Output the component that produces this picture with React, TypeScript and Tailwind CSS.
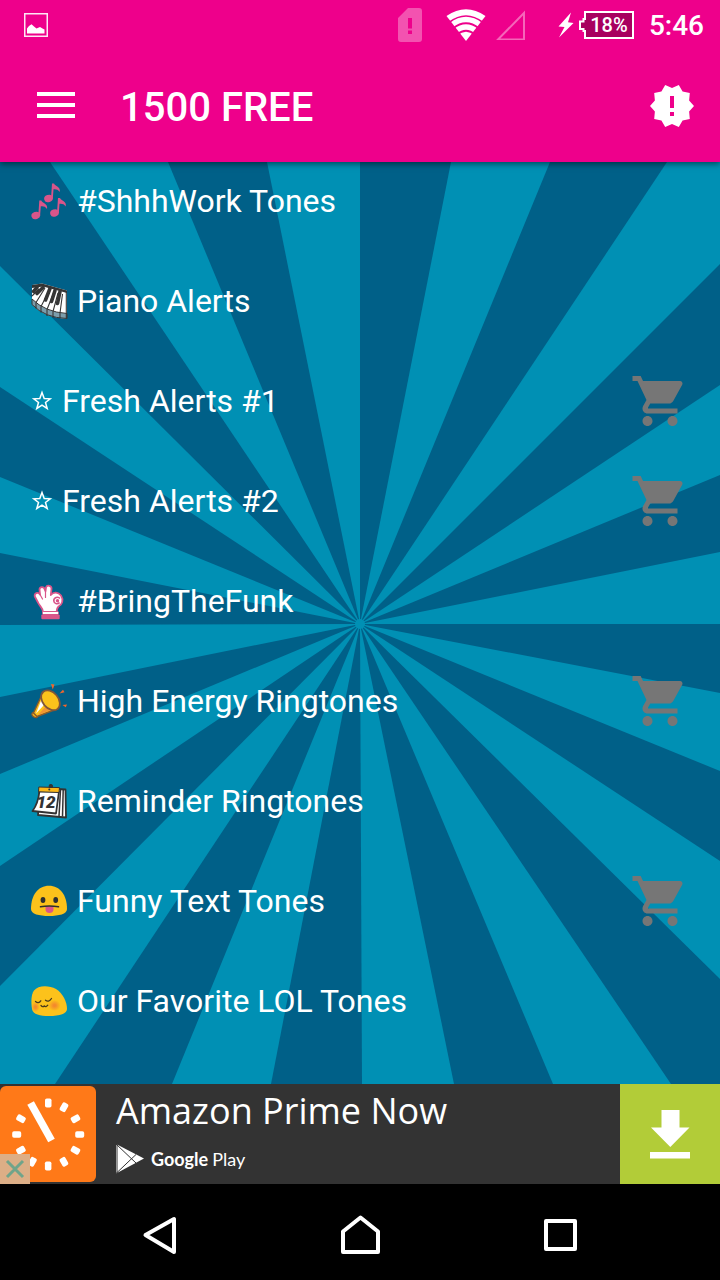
import type { ReactNode } from 'react';
import { MdNewReleases, MdShoppingCart } from 'react-icons/md';

const DARK_RAYS = [
  '360,0 451,0',
  '550,0 667,0',
  '720,102 720,223',
  '720,313 720,390',
  '720,462 720,531',
  '720,609 720,699',
  '720,817 720,922 671,922',
  '553,922 454,922',
  '362,922 271,922',
  '172,922 55,922',
  '0,824 0,704',
  '0,612 0,535',
  '0,463 0,391',
  '0,315 0,225',
  '0,104 0,0 50,0',
  '168,0 267,0',
];

function Sunburst() {
  return (
    <svg
      className="absolute inset-0 h-full w-full"
      viewBox="0 0 720 922"
      preserveAspectRatio="none"
      aria-hidden="true"
    >
      <rect width="720" height="922" fill="#0090b4" />
      {DARK_RAYS.map((points) => (
        <polygon key={points} points={`360,462 ${points}`} fill="#006088" />
      ))}
      <circle cx="360" cy="462" r="5" fill="#0090b4" />
    </svg>
  );
}

function Emoji({ children }: { children: ReactNode }) {
  return (
    <svg className="h-[38px] w-[38px] shrink-0" viewBox="0 0 38 38" aria-hidden="true">
      {children}
    </svg>
  );
}

function Notes() {
  return (
    <Emoji>
      <g fill="#d9558a">
        {[
          [18.5, 16.5],
          [5.8, 33.5],
          [24.5, 31],
        ].map(([x, y]) => (
          <g key={x} transform={`translate(${x} ${y})`}>
            <ellipse rx="4.4" ry="3.6" transform="rotate(-20)" />
            <path d="M2.5 0 3.500-15H5.500C6.500-12 12.500-12 11.200-6.500 9.600-9 7.500-9.500 5-9.200L4.300 0z" />
          </g>
        ))}
      </g>
    </Emoji>
  );
}

function Piano() {
  return (
    <Emoji>
      <path d="M2 3 12 1.5 37 8.5V36.5Q15 36 2 22.5z" fill="#fff" />
      <path d="M2 17Q15 30 37 31.5V36.5Q15 36 2 22.5z" fill="#7c9dab" stroke="#353535" strokeWidth="1" />
      <path
        d="M6 20.5v6M11 24.5v6M17 27.5v6.5M23 29.5v6M30 31v5M36.3 9v27M6 20.5 15 6M11 24.5 19 9M17 27.5 24 10M23 29.5 28 11M30 31 32.5 12M2 14 9 7"
        fill="none"
        stroke="#353535"
        strokeWidth="1.1"
      />
      <path d="M2 3 12 1.5 37 8.5V11L13 4.5 2 6z" fill="#353535" />
      <path
        d="M7 5.5 3.5 9.5M13 5.5 7 11.5M20 6.5 15.5 18M25 8.5 21.5 19.5M30 9.5 27.5 21.5"
        stroke="#353535"
        strokeWidth="3.6"
        strokeLinecap="round"
      />
    </Emoji>
  );
}

function OkHand() {
  return (
    <Emoji>
      <path
        d="M13 30C13 26 9.5 24 8 20.5L4.800 14.500C4 11 8 9.500 10 12.500L9.500 7.500C9.500 4.500 14 4 14.800 7.500L15.500 9 16 5.500C17 2.500 22 3.500 21.500 7L20.800 13C23.500 9.500 28.500 10 31 13.500 34 18 32 23 28.500 24.500 27 26 26.500 27.500 26.500 30z"
        fill="#fff"
        stroke="#d9558a"
        strokeWidth="1.8"
        strokeLinejoin="round"
      />
      <path d="M10 12.500 12.500 17M15.500 9V15.500" stroke="#d9558a" strokeWidth="1.200" strokeLinecap="round" />
      <path d="M30 16.500C28 14 23.500 15.800 23.800 19S28 22.500 29.500 20.500" fill="none" stroke="#d9558a" strokeWidth="1.6" />
      <circle cx="27.500" cy="18.700" r="1.700" fill="#d9558a" />
      <rect x="12.5" y="29.5" width="16" height="3" rx="1" fill="#fff" stroke="#d9558a" />
      <rect x="11.3" y="32.5" width="18.4" height="4.7" rx="1" fill="#d9558a" />
    </Emoji>
  );
}

function PartyCone() {
  return (
    <Emoji>
      <ellipse cx="4.8" cy="33" rx="3.2" ry="2.2" fill="#f5b41c" stroke="#8a5a2c" strokeWidth="1.2" transform="rotate(35 4.8 33)" />
      <path d="M13 10.5 3.5 31 7 34.5 28 26.5z" fill="#fcc21b" stroke="#8a5a2c" strokeWidth="1.4" strokeLinejoin="round" />
      <path d="M12.5 15 6 31.5 14 23z" fill="#fff" />
      <path d="M16 24 8 33 21 28z" fill="#f19534" />
      <ellipse cx="20.5" cy="18.3" rx="11.2" ry="7.8" transform="rotate(50 20.5 18.3)" fill="#fcc21b" stroke="#80563a" strokeWidth="1.8" />
      <path d="M21 2 24.5 2.5 22.8 7.5zM29.5 11.5 33 7.8 34.5 10.3zM32.5 23 37 22.5 35.8 25.3z" fill="#f2662b" />
    </Emoji>
  );
}

function Calendar() {
  return (
    <Emoji>
      <path d="M10 6 35.5 7.5 36 35.5 8 33z" fill="#fff" stroke="#333" strokeWidth="1.8" strokeLinejoin="round" />
      <path d="M30.5 8 29 34M33.2 8 32.5 34.5" stroke="#333" strokeWidth="1.5" />
      <path d="M9.5 9 29 9.5 26 31.5 2.5 29Q8 22 9.500 9z" fill="#fff" stroke="#333" strokeWidth="1.8" strokeLinejoin="round" />
      <path d="M8.8 5 29.5 5.6 29 10.5 8.5 9.8z" fill="#fbb81a" stroke="#333" />
      <path d="M19.5 5.500C18 1.500 23.500 1.500 22.300 5.500z" fill="#333" stroke="#333" strokeWidth="1.200" />
      <circle cx="19.3" cy="7.5" r="1" fill="#333" />
      <text
        x="16"
        y="26"
        fontSize="17"
        fontWeight="900"
        fontStyle="italic"
        textAnchor="middle"
        fill="#333"
        className="font-['Roboto',sans-serif]"
      >
        12
      </text>
    </Emoji>
  );
}

function TongueFace() {
  return (
    <Emoji>
      <path d="M1 27C1 13 8 3.7 19 3.7S37 13 37 27C37 32 29 34 19 34S1 32 1 27z" fill="#fcc21b" />
      <ellipse cx="13" cy="18" rx="2.4" ry="3" fill="#2f2f2f" />
      <ellipse cx="25.7" cy="18" rx="2.4" ry="3" fill="#2f2f2f" />
      <path d="M15.5 24.500h8v2.500a4 4 0 0 1-8 0z" fill="#d9558a" />
      <path d="M10.5 24.8Q19 23 28.5 24.8" fill="none" stroke="#2f2f2f" strokeWidth="1.5" strokeLinecap="round" />
    </Emoji>
  );
}

function RelievedFace() {
  return (
    <Emoji>
      <defs>
        <radialGradient id="blush">
          <stop offset="0.2" stopColor="#f48a2c" />
          <stop offset="1" stopColor="#f48a2c" stopOpacity="0" />
        </radialGradient>
      </defs>
      <path d="M2 27C1 20 1 13 4 8.5 8 3 19 3 26 7 33 11.5 37 20 37 27 37 31.5 30 34 19 34 10 34 3 32.5 2 27z" fill="#fcc21b" />
      <ellipse cx="24.5" cy="23.5" rx="6" ry="5.5" fill="url(#blush)" />
      <ellipse cx="5.5" cy="25" rx="4" ry="5" fill="url(#blush)" />
      <path
        d="M5.5 19.5Q8.5 22 10.8 18.8M15.5 18.2Q18.5 20.8 21.5 16.5M11 23.5Q12.8 25.5 14.3 24 16 25.5 17.8 23.2"
        fill="none"
        stroke="#4a3a1c"
        strokeWidth="1.3"
        strokeLinecap="round"
      />
    </Emoji>
  );
}

function Star() {
  return (
    <svg className="h-[38px] w-[23px] shrink-0" viewBox="0 0 23 38" aria-hidden="true">
      <path
        d="M12 10.5 14.2 16.500 20.200 16.800 15.500 20.500 17.200 26.500 12 23.200 6.800 26.500 8.500 20.500 3.800 16.800 9.800 16.500z"
        fill="none"
        stroke="#fff"
        strokeWidth="1.5"
      />
    </svg>
  );
}

interface Category {
  label: string;
  icon: ReactNode;
  paid?: boolean;
}

const CATEGORIES: Category[] = [
  { label: '#ShhhWork Tones', icon: <Notes /> },
  { label: 'Piano Alerts', icon: <Piano /> },
  { label: 'Fresh Alerts #1', icon: <Star />, paid: true },
  { label: 'Fresh Alerts #2', icon: <Star />, paid: true },
  { label: '#BringTheFunk', icon: <OkHand /> },
  { label: 'High Energy Ringtones', icon: <PartyCone />, paid: true },
  { label: 'Reminder Ringtones', icon: <Calendar /> },
  { label: 'Funny Text Tones', icon: <TongueFace />, paid: true },
  { label: 'Our Favorite LOL Tones', icon: <RelievedFace /> },
];

function StatusBar() {
  return (
    <div className="flex h-[50px] items-center pr-4 pl-6 text-white">
      <svg className="h-6 w-6" viewBox="0 0 24 24" aria-hidden="true">
        <rect x="0.75" y="0.75" width="22.5" height="22.5" fill="none" stroke="#fff" strokeWidth="1.5" strokeOpacity="0.9" />
        <path d="M3 20.5V15.5L5 13 7.5 11.3 10 13.5 12.5 15.5 16 14 18.5 15.5 20.5 16.5V20.5z" fill="#fff" />
      </svg>
      <svg className="ml-auto h-[34px] w-6" viewBox="0 0 24 34" aria-hidden="true">
        <path
          d="M10 0H21a3 3 0 0 1 3 3V31a3 3 0 0 1-3 3H3a3 3 0 0 1-3-3V10zM10 10V20.5H14V10zM10 22.5V26H14V22.5z"
          fill="#fff"
          fillOpacity="0.32"
          fillRule="evenodd"
        />
      </svg>
      <svg className="ml-6 h-8 w-10" viewBox="0 0 40 32" aria-hidden="true">
        <path d="M20 32 .5 7Q20-6.500 39.500 7z" fill="#fff" />
        <g fill="none" stroke="#ee008b" strokeWidth="1.7">
          <path d="M3 13.500Q20 .5 37 13.500" />
          <path d="M7 19.500Q20 9 33 19.500" />
          <path d="M11 25.500Q20 18 29 25.500" />
        </g>
      </svg>
      <svg className="ml-[9px] h-[30px] w-[30px]" viewBox="0 0 30 30" aria-hidden="true">
        <path d="M29 3V29.500H3z" fill="none" stroke="#fff" strokeOpacity="0.4" strokeWidth="2" />
      </svg>
      <svg className="ml-[33px] h-[26px] w-4" viewBox="0 0 16 26" aria-hidden="true">
        <path d="M13 .5 0.5 14.500 6.500 15 1 25.500 15.500 11 10 10.300z" fill="#fff" />
      </svg>
      <div className="ml-1 flex items-center">
        <svg className="z-10 -mr-[2px] h-4 w-2" viewBox="0 0 8 16" aria-hidden="true">
          <path d="M8 2H5.500V4.500H2V12H5.500V14H8" fill="#a8005f" stroke="#fff" strokeWidth="2" />
        </svg>
        <div className="flex h-7 w-[50px] items-center justify-center border-2 border-white bg-[#a8005f] text-xl leading-6 font-medium">
          18%
        </div>
      </div>
      <div className="ml-[15px] pt-[2px] text-[28px] leading-8 font-medium">5:46</div>
    </div>
  );
}

function AppBar() {
  return (
    <div className="flex h-28 items-center px-6 text-white">
      <button type="button" aria-label="Open menu" className="flex h-16 w-16 items-center justify-center pb-[2px]">
        <svg className="h-[26px] w-[38px]" viewBox="0 0 38 26" fill="#fff" aria-hidden="true">
          <rect width="38" height="4" />
          <rect y="11" width="38" height="4" />
          <rect y="22" width="38" height="4" />
        </svg>
      </button>
      <h1 className="ml-8 grow pt-1 text-[40px] leading-[48px] font-medium">1500 FREE</h1>
      <button type="button" aria-label="New releases">
        <MdNewReleases className="h-12 w-12" />
      </button>
    </div>
  );
}

function AdBanner() {
  return (
    <aside className="flex h-[100px] shrink-0 items-center bg-[#333]">
      <div className="relative flex h-full shrink-0 items-center">
        <svg className="h-24 w-24" viewBox="0 0 96 96" aria-hidden="true">
          <rect width="96" height="96" rx="6" fill="#ff7918" />
          {[0, 30, 60, 90, 120, 150, 180, 210, 240, 270, 300].map((angle) => (
            <rect
              key={angle}
              x="45"
              y="12.5"
              width="6.5"
              height="9"
              rx="1.8"
              fill="#fff"
              transform={`rotate(${angle} 48.2 48.5)`}
            />
          ))}
          <path d="M30.6 17 51.5 54.5" stroke="#fff" strokeWidth="7.5" />
        </svg>
        <button
          type="button"
          aria-label="Close ad"
          className="absolute bottom-0 left-0 flex h-[30px] w-[30px] items-center justify-center bg-[#dcae86]"
        >
          <svg className="h-5 w-5" viewBox="0 0 20 20" aria-hidden="true">
            <path d="M2 2 18 18M18 2 2 18" stroke="#6fa48a" strokeWidth="3" />
          </svg>
        </button>
      </div>
      <a href="#install" className="flex h-full grow flex-col pt-[3px] pl-5 text-white">
        <span className="font-['Open_Sans',sans-serif] text-4xl leading-[48px]">Amazon Prime Now</span>
        <span className="mt-2 flex items-center gap-[7px] font-['Lato',sans-serif] text-lg leading-8">
          <svg className="h-[30px] w-7" viewBox="0 0 28 30" aria-hidden="true">
            <path d="M0 0 28 14.500 0 29.500z" fill="#fff" />
            <path d="M0 0 20 19M0 29.500 20 10.500M1 0V29" fill="none" stroke="#333" strokeWidth="1" />
          </svg>
          <span className="flex gap-1">
            <span className="font-bold">Google</span>
            <span>Play</span>
          </span>
        </span>
      </a>
      <button
        type="button"
        aria-label="Download"
        className="flex h-full w-[100px] shrink-0 items-center justify-center bg-[#b2cc38]"
      >
        <svg className="h-[50px] w-10" viewBox="0 0 40 50" fill="#fff" aria-hidden="true">
          <path d="M11.5 1H29.500V18.500H39.500L20.300 38 1 18.500H11.500zM0 43H40V49.500H0z" />
        </svg>
      </button>
    </aside>
  );
}

function NavButton({ label, path }: { label: string; path: string }) {
  return (
    <button type="button" aria-label={label} className="flex items-center justify-center">
      <svg className="h-10 w-10" viewBox="0 0 40 40" aria-hidden="true">
        <path d={path} fill="none" stroke="#fff" strokeWidth="4" strokeLinejoin="round" />
      </svg>
    </button>
  );
}

export default function App() {
  return (
    <div className="flex min-h-screen flex-col bg-black font-['Roboto',sans-serif]">
      <header className="z-10 shrink-0 bg-[#ee008b] shadow-[0_2px_6px_rgba(0,0,0,0.5)]">
        <StatusBar />
        <AppBar />
      </header>
      <main className="relative grow overflow-hidden">
        <Sunburst />
        <ul className="relative flex flex-col gap-10 px-[30px] pt-[9px] pb-12">
          {CATEGORIES.map(({ label, icon, paid }) => (
            <li key={label}>
              <button type="button" className="flex h-[60px] w-full items-center gap-[9px] text-left text-[32px] leading-10 text-white">
                {icon}
                <span className="grow">{label}</span>
                {paid && <MdShoppingCart className="h-[60px] w-[60px] shrink-0 text-[#767676]" />}
              </button>
            </li>
          ))}
        </ul>
      </main>
      <AdBanner />
      <nav className="grid h-24 shrink-0 grid-cols-3 px-[60px] pt-[6px]">
        <NavButton label="Back" path="M5.500 20 34 4V37z" />
        <NavButton label="Home" path="M3 16.500V37H38V16.500L20.500 2.500z" />
        <NavButton label="Recent apps" path="M6 6H35V34H6z" />
      </nav>
    </div>
  );
}
